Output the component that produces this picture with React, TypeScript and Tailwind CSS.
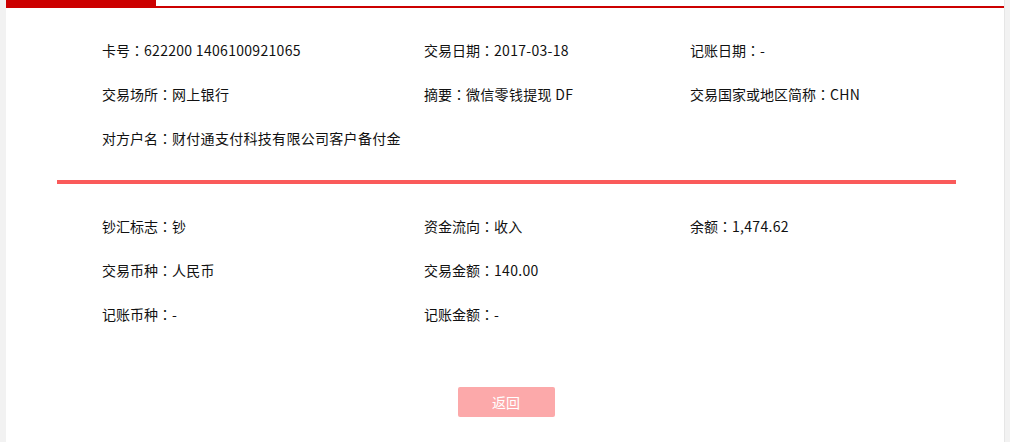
import React from "react";

const topRows: [string, string][][] = [
    [["卡号", "622200 1406100921065"], ["交易日期", "2017-03-18"], ["记账日期", "-"]],
    [["交易场所", "网上银行"], ["摘要", "微信零钱提现 DF"], ["交易国家或地区简称", "CHN"]],
    [["对方户名", "财付通支付科技有限公司客户备付金"]],
];

const bottomRows: [string, string][][] = [
    [["钞汇标志", "钞"], ["资金流向", "收入"], ["余额", "1,474.62"]],
    [["交易币种", "人民币"], ["交易金额", "140.00"]],
    [["记账币种", "-"], ["记账金额", "-"]],
];

function InfoGrid({ rows }: { rows: [string, string][][] }) {
    return (
        <div className="pl-[96px]">
            {rows.map((row, i) => (
                <div key={i} className="grid grid-cols-[322px_266px_1fr] h-[44px] items-center">
                    {row.map(([label, value]) => (
                        <div key={label} className="whitespace-nowrap">
                            {label}
                            <span style={{ fontFamily: '"Noto Sans CJK TC", sans-serif' }}>：</span>
                            <span className="tracking-[0.3px]">{value}</span>
                        </div>
                    ))}
                </div>
            ))}
        </div>
    );
}

export default function App() {
    return (
        <div
            className="w-[1010px] h-[442px] bg-[#f2f2f2] flex text-[14px] text-[#111] overflow-hidden"
            style={{ fontFamily: '"Noto Sans CJK SC", "Noto Sans", sans-serif' }}
        >
            <div className="ml-[6px] w-[999px] bg-white border-r border-[#e6e6e6] flex flex-col">
                {/* top tab bar */}
                <div className="h-[8px] border-b-2 border-[#cc0000] flex">
                    <div className="w-[150px] bg-[#cc0000]" />
                </div>

                <div className="pt-[20px]">
                    <InfoGrid rows={topRows} />
                </div>

                <div className="ml-[51px] mr-[48px] mt-[20px] h-[4px] bg-[#fa5a5a]" />

                <div className="pt-[20px]">
                    <InfoGrid rows={bottomRows} />
                </div>

                <div className="flex justify-center mt-[51px] pl-[2px]">
                    <button className="w-[97px] h-[30px] rounded-[2px] bg-[#fca9aa] text-white text-[14px]">
                        返回
                    </button>
                </div>
            </div>
        </div>
    );
}
